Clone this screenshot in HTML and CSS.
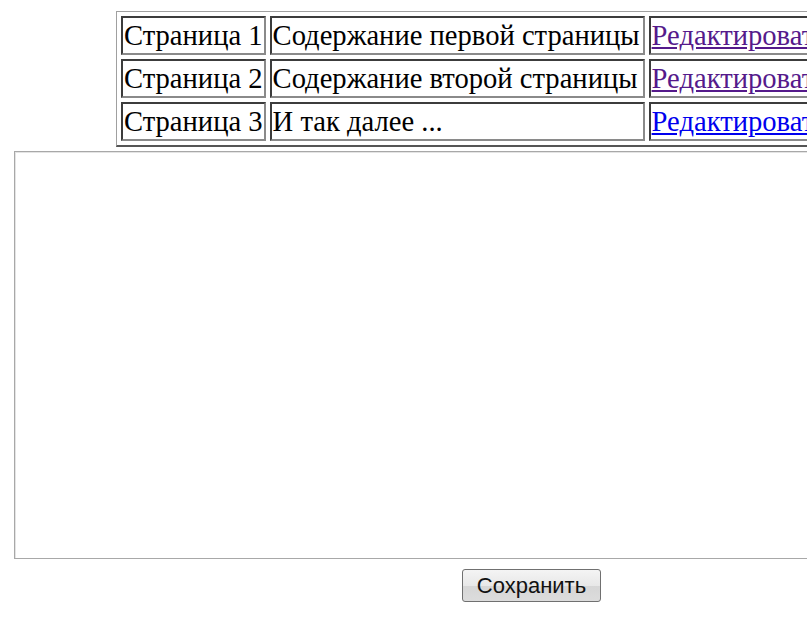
FILE: index.html
```html
<!DOCTYPE html>
<html lang="ru">
<head>
<meta charset="utf-8">
<title>Страницы</title>
<link rel="stylesheet" href="styles.css">
</head>
<body>
<div class="page">
  <table class="pages">
    <tr>
      <td class="c1">Страница 1</td>
      <td class="c2">Содержание первой страницы</td>
      <td class="c3"><a class="visited" href="#">Редактировать</a></td>
    </tr>
    <tr>
      <td class="c1">Страница 2</td>
      <td class="c2">Содержание второй страницы</td>
      <td class="c3"><a class="visited" href="#">Редактировать</a></td>
    </tr>
    <tr>
      <td class="c1">Страница 3</td>
      <td class="c2">И так далее ...</td>
      <td class="c3"><a class="fresh" href="#">Редактировать</a></td>
    </tr>
  </table>
  <textarea class="editor"></textarea>
  <div class="actions"><button class="save" type="button">Сохранить</button></div>
</div>
</body>
</html>
```

FILE: styles.css
```css
html, body {
  margin: 0;
  padding: 0;
  background: #ffffff;
  overflow: hidden;
}
.page {
  width: 1100px;
  padding-top: 11px;
  font-family: "Liberation Serif", "Times New Roman", serif;
}
.pages {
  margin-left: 116px;
  border-collapse: separate;
  border-spacing: 4px;
  border-style: solid;
  border-width: 1px 2px 2px 1px;
  border-color: #a0a0a0 #555555 #555555 #a0a0a0;
  font-size: 28.6px;
  line-height: 33px;
}
.pages td {
  border-style: solid;
  border-width: 2px;
  border-color: #3c3c3c #8a8a8a #8a8a8a #3c3c3c;
  padding: 1px 1px 1px 1px;
  white-space: nowrap;
  color: #000000;
}
.c1 { width: 138px; }
.c2 { width: 369px; }
.c3 { width: 300px; }
.visited { color: #551a8b; }
.fresh { color: #0000ee; }
.editor {
  display: block;
  margin: 4px 0 0 14px;
  width: 1030px;
  height: 408px;
  box-sizing: border-box;
  border: 1px solid #a8a8a8;
  box-shadow: inset 1px 1px 0 #e4e4e4;
  resize: none;
  background: #ffffff;
}
.actions {
  padding: 10px 0 0 462px;
}
.save {
  width: 139px;
  height: 33px;
  border: 1px solid #707070;
  border-radius: 3px;
  background: linear-gradient(#f4f4f4 0%, #e8e8e8 50%, #d6d6d6 51%, #dcdcdc 100%);
  font-family: "Liberation Sans", Arial, sans-serif;
  font-size: 22px;
  color: #111111;
  padding: 0;
}
```
